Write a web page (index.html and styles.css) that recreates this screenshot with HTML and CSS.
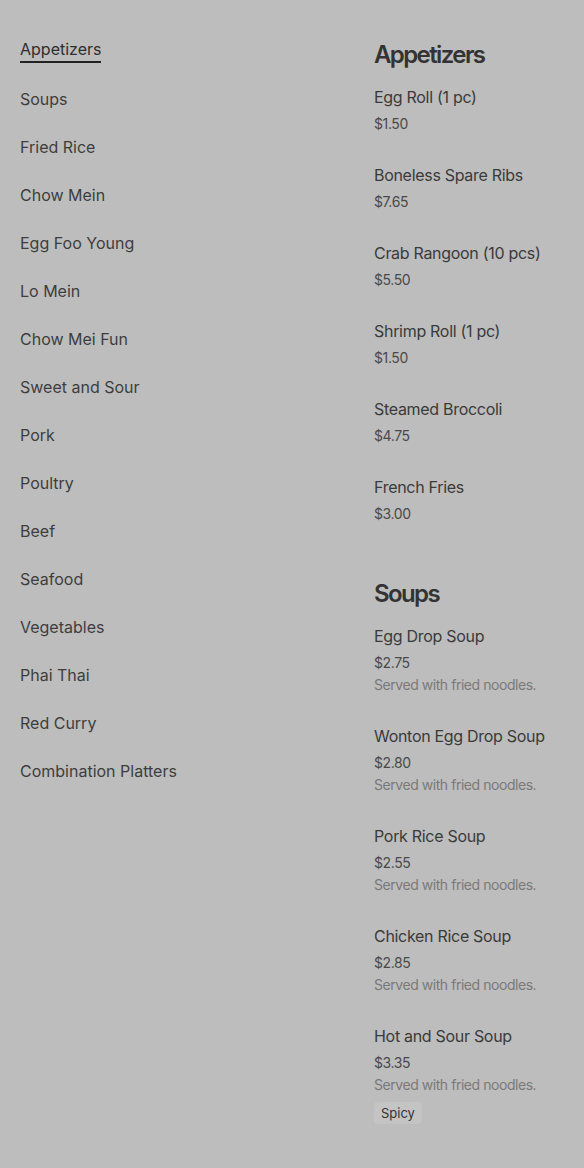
FILE: index.html
```html
<!DOCTYPE html>
<html>
<head>
<meta charset="utf-8">
<link rel="stylesheet" href="styles.css">
</head>
<body>
<div class="page">
  <nav class="nav">
    <a class="nav-item active">Appetizers</a>
    <a class="nav-item">Soups</a>
    <a class="nav-item">Fried Rice</a>
    <a class="nav-item">Chow Mein</a>
    <a class="nav-item">Egg Foo Young</a>
    <a class="nav-item">Lo Mein</a>
    <a class="nav-item">Chow Mei Fun</a>
    <a class="nav-item">Sweet and Sour</a>
    <a class="nav-item">Pork</a>
    <a class="nav-item">Poultry</a>
    <a class="nav-item">Beef</a>
    <a class="nav-item">Seafood</a>
    <a class="nav-item">Vegetables</a>
    <a class="nav-item">Phai Thai</a>
    <a class="nav-item">Red Curry</a>
    <a class="nav-item">Combination Platters</a>
  </nav>
  <main class="menu">
    <section class="section">
      <h2 class="section-title">Appetizers</h2>
      <div class="item"><div class="item-name">Egg Roll (1 pc)</div><div class="item-price">$1.50</div></div>
      <div class="item"><div class="item-name">Boneless Spare Ribs</div><div class="item-price">$7.65</div></div>
      <div class="item"><div class="item-name">Crab Rangoon (10 pcs)</div><div class="item-price">$5.50</div></div>
      <div class="item"><div class="item-name">Shrimp Roll (1 pc)</div><div class="item-price">$1.50</div></div>
      <div class="item"><div class="item-name">Steamed Broccoli</div><div class="item-price">$4.75</div></div>
      <div class="item"><div class="item-name">French Fries</div><div class="item-price">$3.00</div></div>
    </section>
    <section class="section">
      <h2 class="section-title">Soups</h2>
      <div class="item"><div class="item-name">Egg Drop Soup</div><div class="item-price">$2.75</div><div class="item-desc">Served with fried noodles.</div></div>
      <div class="item"><div class="item-name">Wonton Egg Drop Soup</div><div class="item-price">$2.80</div><div class="item-desc">Served with fried noodles.</div></div>
      <div class="item"><div class="item-name">Pork Rice Soup</div><div class="item-price">$2.55</div><div class="item-desc">Served with fried noodles.</div></div>
      <div class="item"><div class="item-name">Chicken Rice Soup</div><div class="item-price">$2.85</div><div class="item-desc">Served with fried noodles.</div></div>
      <div class="item"><div class="item-name">Hot and Sour Soup</div><div class="item-price">$3.35</div><div class="item-desc">Served with fried noodles.</div><div class="tags"><span class="tag">Spicy</span></div></div>
    </section>
  </main>
</div>
</body>
</html>
```
FILE: styles.css
```css
html, body {
  margin: 0;
  padding: 0;
  background: #bdbdbd;
}
body {
  font-family: Inter, "Noto Sans", sans-serif;
  color: #3a3a3a;
}
.page {
  display: flex;
  padding: 37px 20px 0 20px;
}
.nav {
  width: 354px;
  display: flex;
  flex-direction: column;
  align-items: flex-start;
  gap: 24px;
}
.nav-item {
  font-size: 16px;
  line-height: 24px;
  color: #3d3d3d;
  letter-spacing: 0;
}
.nav-item.active {
  color: #2e2e2e;
  border-bottom: 2px solid #222;
}
.menu {
  flex: 1;
  display: flex;
  flex-direction: column;
  gap: 54px;
  padding-top: 2px;
}
.section {
  display: flex;
  flex-direction: column;
  gap: 29px;
}
.section-title {
  margin: 0 0 -15px 0;
  font-size: 24px;
  line-height: 32px;
  font-weight: 600;
  letter-spacing: -1.6px;
  color: #333;
}
.item {
  display: flex;
  flex-direction: column;
  align-items: flex-start;
}
.item-name {
  font-size: 16px;
  line-height: 24px;
  color: #3a3a3a;
  letter-spacing: -0.3px;
}
.item-price {
  margin-top: 5px;
  font-size: 14px;
  line-height: 20px;
  color: #4a4a4a;
  letter-spacing: -0.4px;
}
.item-desc {
  margin-top: 2px;
  font-size: 14px;
  line-height: 20px;
  color: #7a7a7a;
  letter-spacing: -0.45px;
}
.tags {
  margin-top: 7px;
  display: flex;
}
.tag {
  font-size: 13px;
  line-height: 22px;
  padding: 0 7px;
  border-radius: 4px;
  background: #c4c4c4;
  color: #333;
}
```
